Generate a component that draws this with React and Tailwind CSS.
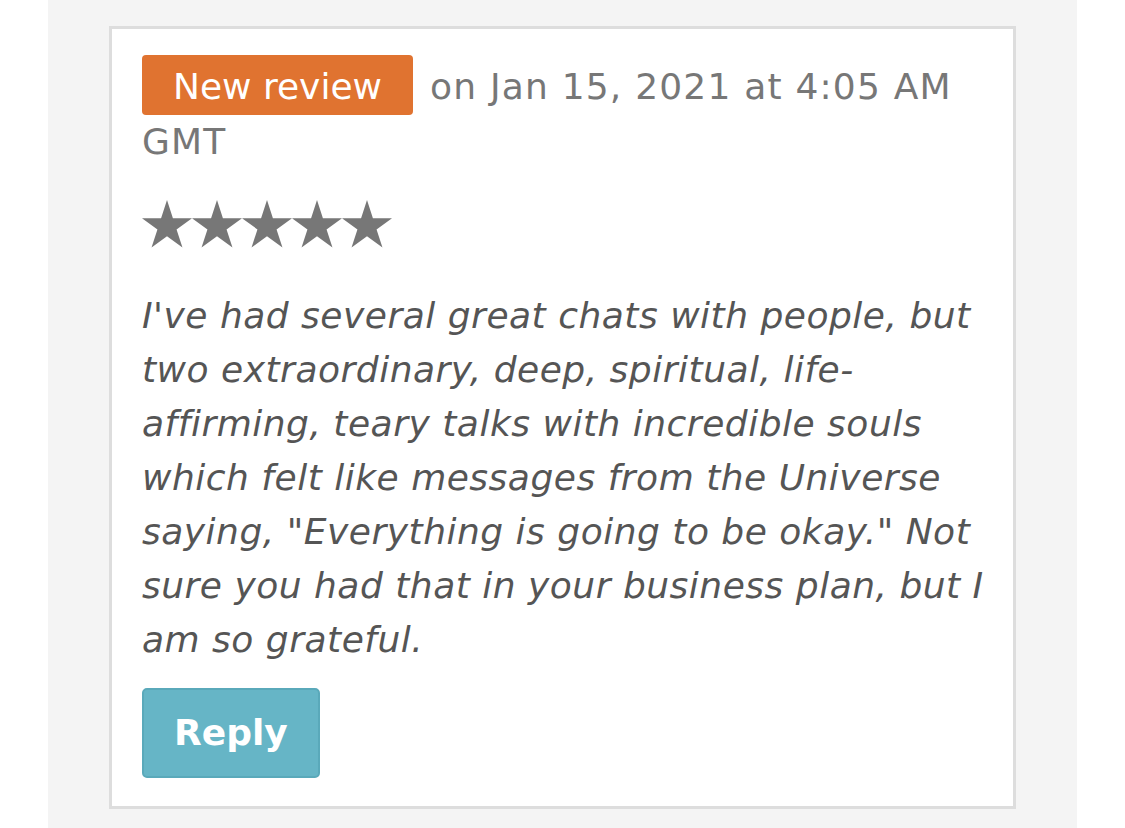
import React from "react";

function Star() {
  return (
    <svg viewBox="0 0 50 48" className="w-[50px] h-[48px] fill-[#777777]">
      <path d="M25 0L30.91 18.17H50L34.56 29.41L40.46 47.58L25 36.35L9.54 47.58L15.44 29.41L0 18.17H19.09Z" />
    </svg>
  );
}

export default function App() {
  const review =
    "I've had several great chats with people, but two extraordinary, deep, spiritual, life-affirming, teary talks with incredible souls which felt like messages from the Universe saying, \"Everything is going to be okay.\" Not sure you had that in your business plan, but I am so grateful.";

  return (
    <div className="min-h-screen bg-white font-['DejaVu_Sans',Verdana,sans-serif]">
      <div className="ml-[48px] min-h-screen w-[1029px] bg-[#f4f4f4] pl-[61px] pt-[26px] pb-[20px]">
        <div className="w-[907px] border-[3px] border-[#dddddd] bg-white pl-[30px] pr-[8px] pt-[26px] pb-[28px]">
          <div className="text-[36px] leading-[54px] text-[#777777]">
            <span className="mr-[17px] inline-block rounded-[4px] bg-[#e07330] px-[31px] pt-[5px] pb-[1px] leading-[54px] text-white">
              New review
            </span>
            <span className="tracking-[1.2px]">on Jan 15, 2021 at 4:05 AM GMT</span>
          </div>

          <div className="mt-[31px] flex">
            {[0, 1, 2, 3, 4].map((i) => (
              <Star key={i} />
            ))}
          </div>

          <p className="mt-[41px] text-[36px] leading-[54px] italic tracking-[0.5px] text-[#555555]">
            {review}
          </p>

          <button className="mt-[21px] h-[90px] rounded-[5px] border-2 border-[#5aa9ba] bg-[#66b5c6] px-[30px] text-[36px] font-bold text-white">
            Reply
          </button>
        </div>
      </div>
    </div>
  );
}
